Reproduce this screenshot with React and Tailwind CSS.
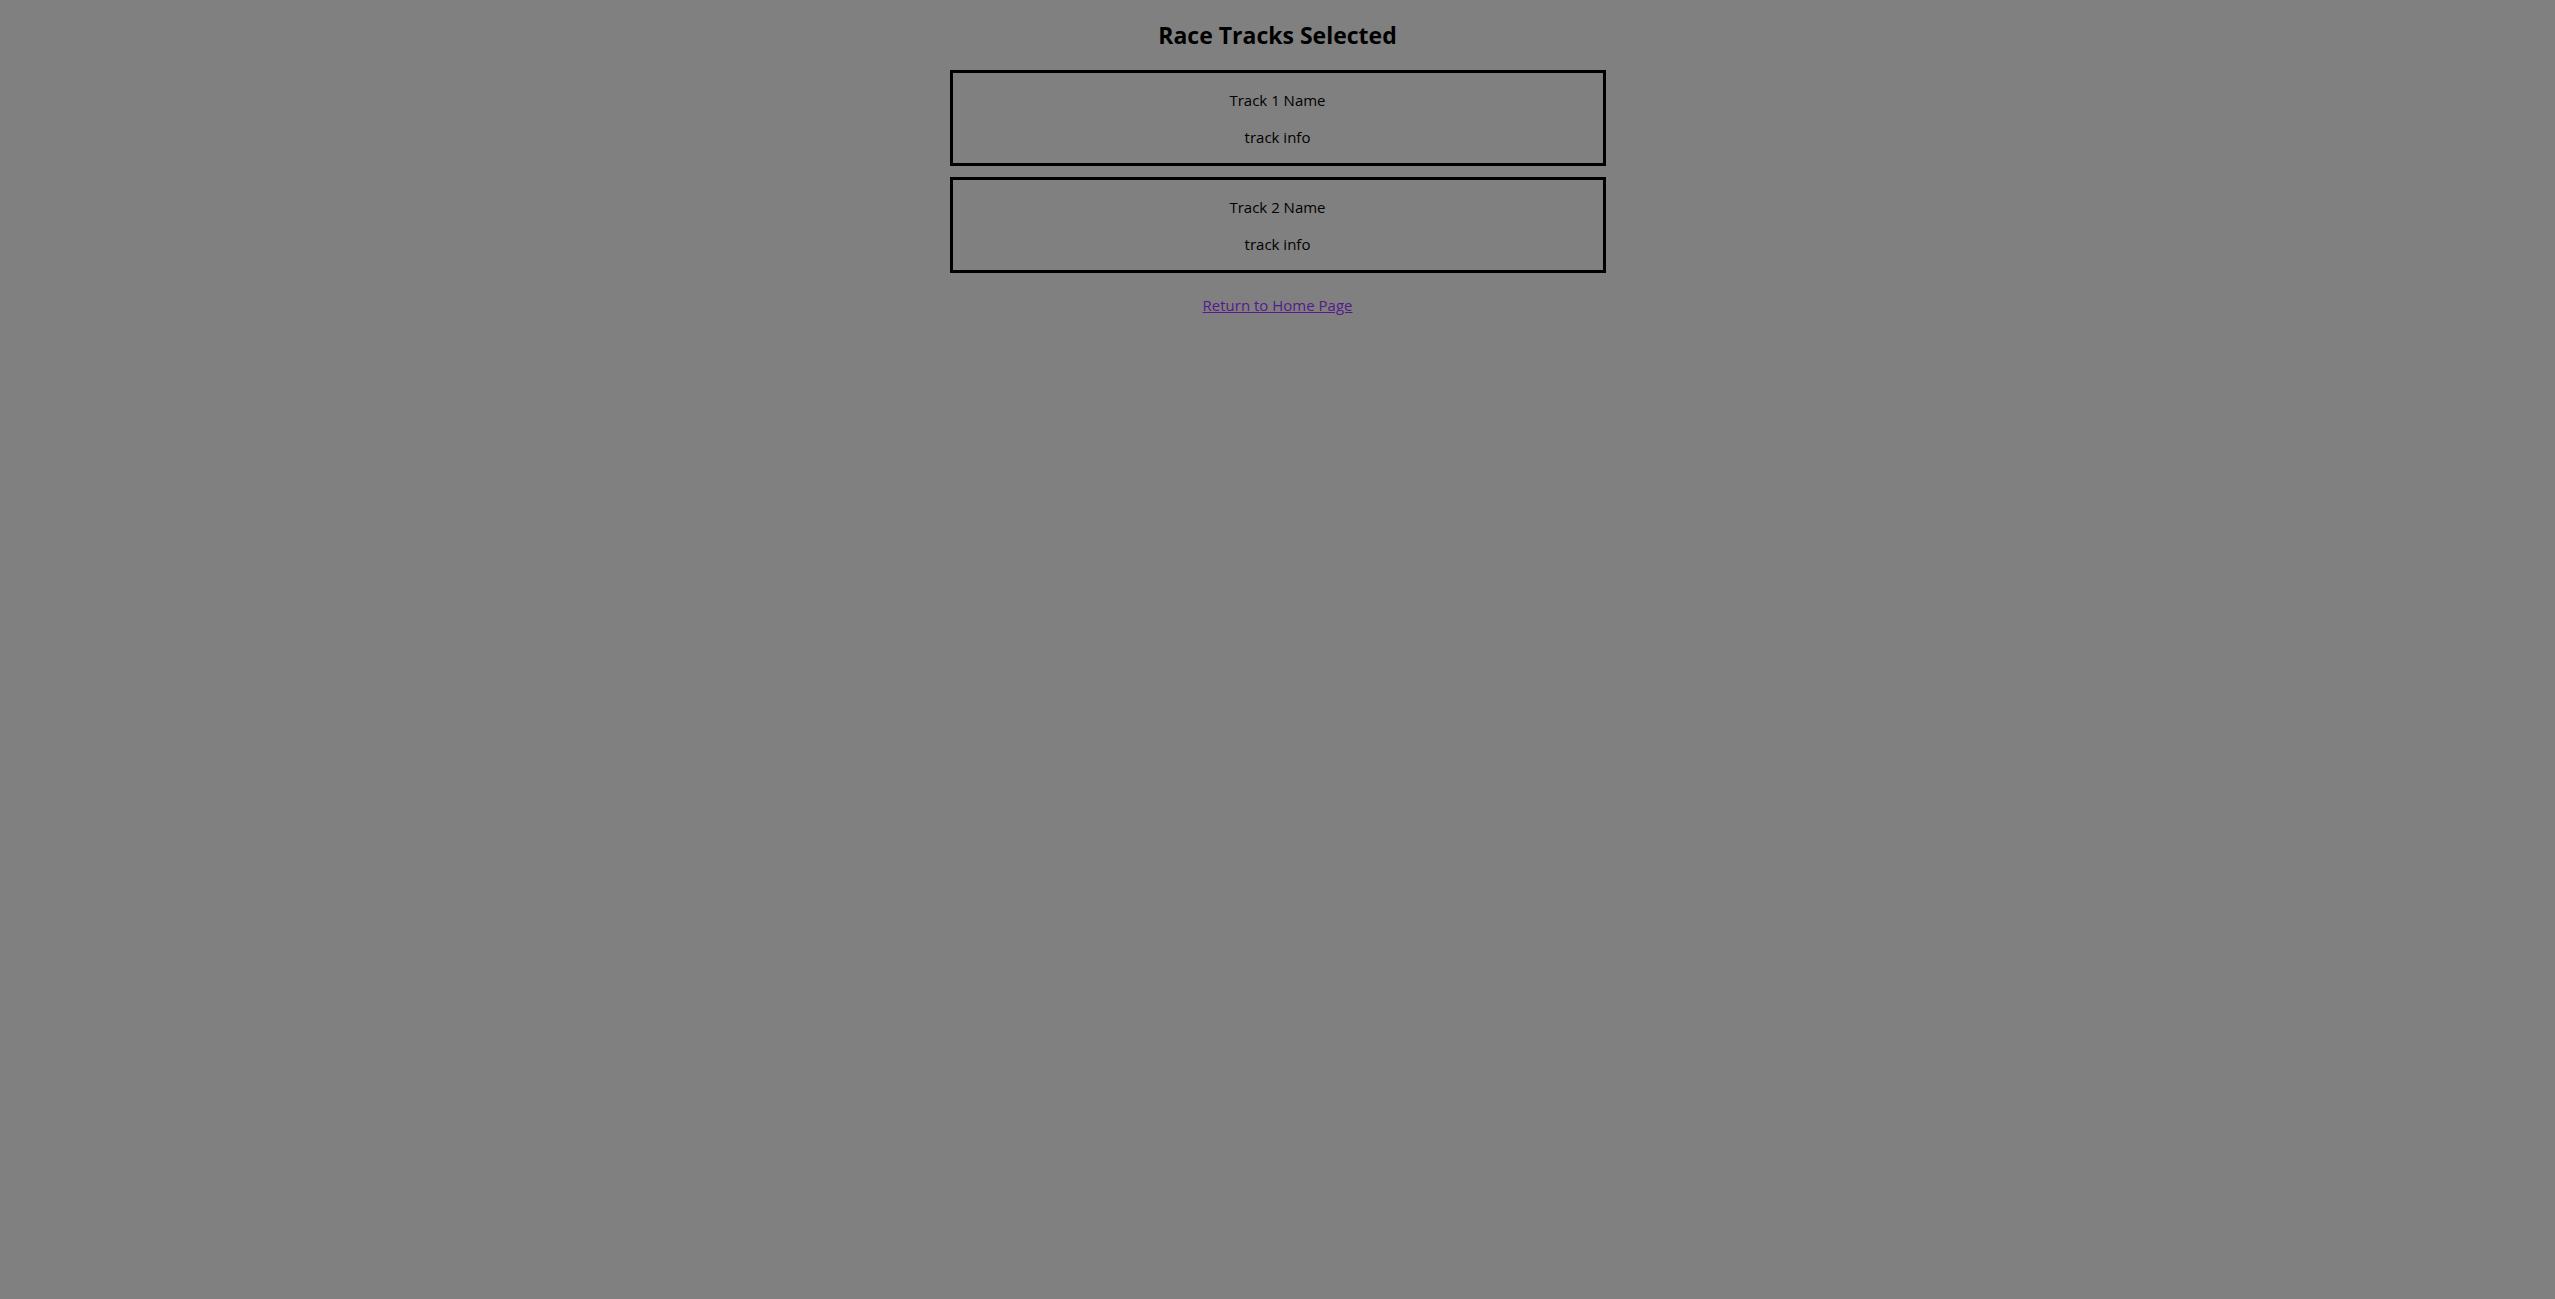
export default function App() {
  const tracks = [
    { name: 'Track 1 Name', info: 'track info' },
    { name: 'Track 2 Name', info: 'track info' },
  ];

  return (
    <div className="min-h-screen bg-[#808080] text-black font-['Open_Sans',sans-serif] flex flex-col items-center pt-[19px]">
      <h1 className="text-[23px] leading-[32px] font-bold">Race Tracks Selected</h1>
      <div className="mt-[19px] flex flex-col gap-[11px]">
        {tracks.map((t) => (
          <div key={t.name} className="w-[656px] border-[3px] border-black text-center text-[15px] leading-[21px] pt-[17px] pb-[15px] flex flex-col gap-[16px]">
            <p>{t.name}</p>
            <p>{t.info}</p>
          </div>
        ))}
      </div>
      <a href="#" className="mt-[22px] text-[15px] leading-[21px] text-[#551a8b] underline">Return to Home Page</a>
    </div>
  );
}
